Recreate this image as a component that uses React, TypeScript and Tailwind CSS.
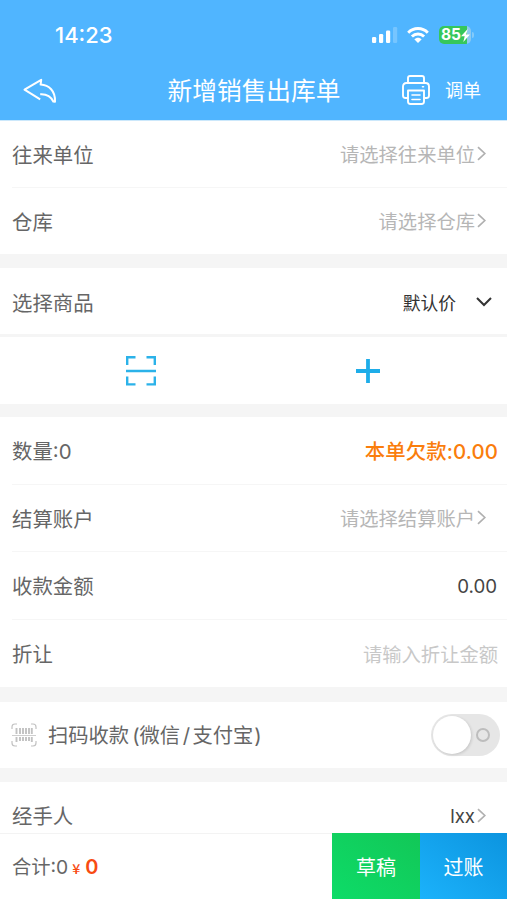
import type { ReactNode } from "react";

function Chevron() {
  return (
    <svg className="h-[15px] w-[9px] shrink-0" viewBox="0 0 9 15" fill="none" stroke="#b0b0b0" strokeWidth="1.7">
      <path d="M1 1.2 7.800 7.500 1 13.8" />
    </svg>
  );
}

function Row({ label, line, height, children }: { label: string; line?: boolean; height: string; children?: ReactNode }) {
  return (
    <div className={`flex bg-white pl-3 ${height}`}>
      <div className={`flex flex-1 items-center justify-between ${line ? "border-b border-[#f6f6f6]" : ""}`}>
        <span className="pt-[4px] text-[20.4px] text-[#666]">{label}</span>
        {children}
      </div>
    </div>
  );
}

function Picker({ text, filled }: { text: string; filled?: boolean }) {
  return (
    <div className="flex items-center gap-[2px] pr-[21px]">
      <span className={filled ? "pt-[2px] text-[18.6px] text-[#444]" : "pt-[3px] text-[19.3px] text-[#b6b6b6]"}>{text}</span>
      <Chevron />
    </div>
  );
}

function StatusBar() {
  return (
    <div className="flex h-[60px] items-center justify-between pl-[55px] pr-[33px] pt-[10px]">
      <span className="pb-px text-[22px] font-medium">14:23</span>
      <div className="flex items-center">
        <svg className="h-4 w-[26px]" viewBox="0 0 26 16" fill="#fff">
          <rect x="0" y="10" width="4.2" height="6" rx="1.2" />
          <rect x="7" y="7" width="4.2" height="9" rx="1.2" />
          <rect x="14" y="3.5" width="4.2" height="12.5" rx="1.2" />
          <rect x="21" y="0" width="4.2" height="16" rx="1.2" opacity=".22" />
        </svg>
        <svg className="ml-[9px] h-4 w-[22px]" viewBox="0 0 22 16" fill="none" stroke="#fff" strokeWidth="2.9">
          <path d="M1.200 5.700C6.600.1 15.400.1 20.800 5.700" />
          <path d="M4.900 9.600C8.300 6.100 13.700 6.100 17.100 9.600" />
          <path d="M7.300 12.300C9.400 10.200 12.600 10.200 14.700 12.300L11 16Z" fill="#fff" stroke="none" />
        </svg>
        <div className="ml-[10px] flex h-[18px] w-8 items-center rounded-[5px] bg-linear-to-r from-[#36c75b] from-88% to-[#8dcaf0] to-88% pl-[2px]">
          <span className="text-[15.5px] font-bold leading-none">85</span>
          <svg className="h-[13px] w-[9px]" viewBox="0 0 9 13" fill="#fff">
            <path d="M6.700 0 0 7.300H3.700L2.300 13 9 5.500H5.200Z" />
          </svg>
        </div>
        <span className="ml-px h-[6px] w-[2px] rounded-r-full bg-[#83cafa]" />
      </div>
    </div>
  );
}

function Header() {
  return (
    <header className="h-[121px] border-b border-[#cce8fb] bg-[#50b5ff] text-white">
      <StatusBar />
      <div className="grid h-[60px] grid-cols-[1fr_auto_1fr] items-center pl-[27px] pr-[26px]">
        <svg className="-ml-[4px] h-[25px] w-[34px]" viewBox="0 0 34 25" fill="none" stroke="#fff" strokeWidth="2" strokeLinejoin="round">
          <path d="M17.200 21.300 1.500 11.700 18.200 1.800 17.600 6.600C26 7 32.500 13 32 23.700L30.300 23.500C27.500 17.500 23.500 15.800 17.200 16.200" />
        </svg>
        <h1 className="pt-[2px] text-[24.7px]">新增销售出库单</h1>
        <div className="flex items-center justify-end gap-[15px]">
          <svg className="h-[30px] w-[28px]" viewBox="0 0 28 30" fill="none" stroke="#fff" strokeWidth="1.9" strokeLinejoin="round" strokeLinecap="round">
            <path d="M6 7.500V3Q6 1 8 1H20Q22 1 22 3V7.500" />
            <path d="M6 23H3.500Q1 23 1 20.500V11.500Q1 8 4.500 8H23.500Q27 8 27 11.500V20.500Q27 23 24.500 23H22" />
            <path d="M6 15.500H22V26.500Q22 29 19.500 29H8.500Q6 29 6 26.500Z" />
            <path d="M10 20H18M10 24.500H18M20.500 11.700H21.500" strokeWidth="1.600" />
          </svg>
          <span className="pt-[2px] text-[18px]">调单</span>
        </div>
      </div>
    </header>
  );
}

function BarcodeIcon() {
  return (
    <svg className="h-6 w-[26px]" viewBox="0 0 26 24" fill="none" stroke="#c2c2c2">
      <path d="M1 6V4Q1 1 4 1H6M20 1H22Q25 1 25 4V6M1 18V20Q1 23 4 23H6M20 23H22Q25 23 25 20V18" strokeWidth="1.200" />
      <path d="M5.500 5V11M9 5V11M12 5V11M15 5V11M18 5V11M20.800 5V11M5.500 14V19M9 14V18M12 14V18M15 14V18M18 14V18M20.800 14V19" strokeWidth="1.900" />
      <path d="M1 12.500H25" strokeWidth=".8" />
    </svg>
  );
}

export default function App() {
  return (
    <main className="flex h-[900px] w-[507px] flex-col overflow-hidden bg-[#f5f5f5] font-['Inter','Noto_Sans_CJK_SC',sans-serif] leading-none">
      <Header />
      <Row label="往来单位" line height="h-[67px]"><Picker text="请选择往来单位" /></Row>
      <Row label="仓库" height="h-[66px]"><Picker text="请选择仓库" /></Row>

      <section className="mt-[14px]">
        <Row label="选择商品" height="h-[66px] pt-[2px]">
          <div className="flex items-center gap-5 pr-[15px]">
            <span className="pt-[3px] text-[17.8px] text-[#333]">默认价</span>
            <svg className="h-[10px] w-4" viewBox="0 0 16 10" fill="none" stroke="#333" strokeWidth="2">
              <path d="M1 1 8 8 15 1" />
            </svg>
          </div>
        </Row>
        <div className="mt-[3px] grid h-[67px] grid-cols-[282px_1fr] items-center bg-white">
          <svg className="h-[30px] w-[30px] justify-self-center" viewBox="0 0 30 30" fill="none" stroke="#2bb2e9" strokeWidth="2.400">
            <path d="M1.200 9V1.200H9.500M20.500 1.200H28.800V9M1.200 20.500V28.400H9.500M20.500 28.400H28.800V20.500M0 15H30" />
          </svg>
          <svg className="ml-[74px] h-6 w-6" viewBox="0 0 24 24" stroke="#1eade9" strokeWidth="3.800">
            <path d="M12 0V24M0 12H24" />
          </svg>
        </div>
      </section>

      <section className="mt-[13px]">
        <Row label="数量:0" line height="h-[68px]">
          <span className="pr-[9px] pt-[3px] text-[20.4px] font-medium tracking-[0.1px] text-[#fa7d0c]">本单欠款:0.00</span>
        </Row>
        <Row label="结算账户" line height="h-[67px]"><Picker text="请选择结算账户" /></Row>
        <Row label="收款金额" line height="h-[68px]">
          <span className="pr-[10px] pt-[3px] text-[18.700px] text-[#444]">0.00</span>
        </Row>
        <Row label="折让" height="h-[67px]">
          <span className="pr-[9px] pt-[4px] text-[19.3px] text-[#c8c8c8]">请输入折让金额</span>
        </Row>
      </section>

      <section className="mt-[15px] flex h-[66px] items-center justify-between bg-white pl-[11px] pr-[7px]">
        <div className="flex items-center gap-[11px]">
          <BarcodeIcon />
          <span className="pt-[3px] text-[20.3px] text-[#666]">扫码收款<span className="ml-[3px]">(</span>微信<span className="mx-[2.500px]">/</span>支付宝<span className="ml-px">)</span></span>
        </div>
        <div className="flex h-[42px] w-[69px] items-center justify-between rounded-full bg-[#e6e6e6] pl-[2px] pr-[10px]">
          <span className="size-[38px] rounded-full bg-white shadow-[1px_1px_3px_rgba(0,0,0,0.14)]" />
          <span className="size-[14px] rounded-full border-2 border-[#bdbdbd]" />
        </div>
      </section>

      <section className="mt-[14px] h-[51px] overflow-hidden bg-white">
        <Row label="经手人" height="h-[67px]"><Picker text="lxx" filled /></Row>
      </section>

      <footer className="flex h-[67px] bg-white">
        <div className="flex flex-1 items-center border-t border-[#f3f3f3] pl-3 text-[19.300px] text-[#666]">
          <span className="pt-px">合计:0</span>
          <span className="ml-[4px] mt-px w-[9px] font-['Noto_Sans_CJK_SC'] text-[14px] font-medium text-[#f84b12]">¥</span>
          <span className="ml-[4px] text-[20px] font-semibold text-[#f84b12]">0</span>
        </div>
        <button className="mb-px w-[88px] bg-linear-to-tr from-[#0ddc68] to-[#12c757] pt-[3px] text-[20px] text-white">草稿</button>
        <button className="mb-px w-[87px] bg-linear-to-tr from-[#1bb2fb] to-[#0c94df] pt-[3px] text-[20px] text-white">过账</button>
      </footer>
    </main>
  );
}
